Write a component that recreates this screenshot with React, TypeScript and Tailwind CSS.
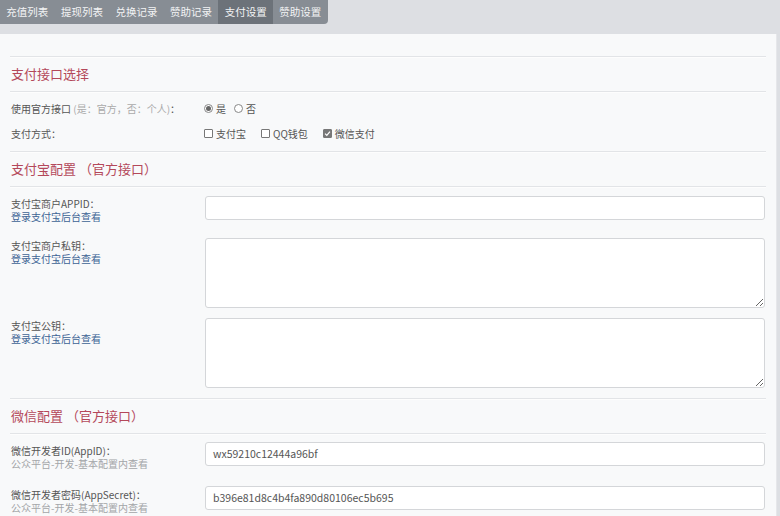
import React from "react";

const font = { fontFamily: '"Noto Sans CJK SC", "Noto Sans", "Liberation Sans", sans-serif' };

function Hr() {
  return <div className="h-0 border-t border-[#e2e4e7] shadow-[0_1px_0_#fdfdfd]" />;
}

function Title({ children }: { children: React.ReactNode }) {
  return (
    <div className="h-[34px] flex items-center text-[13px] text-[#b4485a] pl-px">
      {children}
    </div>
  );
}

function Radio({ checked }: { checked?: boolean }) {
  return (
    <span className="inline-flex w-[9px] h-[9px] rounded-full border border-[#888] items-center justify-center bg-white">
      {checked && <span className="w-[5px] h-[5px] rounded-full bg-[#666]" />}
    </span>
  );
}

function Check({ checked }: { checked?: boolean }) {
  return (
    <span
      className={
        "inline-flex w-[9px] h-[9px] rounded-[1px] border items-center justify-center " +
        (checked ? "bg-[#777] border-[#777]" : "bg-white border-[#777]")
      }
    >
      {checked && (
        <svg width="7" height="7" viewBox="0 0 8 8">
          <path d="M1.2 4.2 L3.2 6.1 L6.8 1.8" stroke="#fff" strokeWidth="1.4" fill="none" />
        </svg>
      )}
    </span>
  );
}

function FieldLabel({ main, sub, subColor, top }: { main: string; sub: string; subColor: string; top: string }) {
  return (
    <div className={"w-[194px] shrink-0 h-full text-[10px] " + top}>
      <div className="h-[13px] leading-[13px] text-[#555] whitespace-nowrap">{main}</div>
      <div className={"h-[13px] leading-[13px] whitespace-nowrap " + subColor}>{sub}</div>
    </div>
  );
}

export default function App() {
  const tabs = ["充值列表", "提现列表", "兑换记录", "赞助记录", "支付设置", "赞助设置"];
  return (
    <div className="w-[780px] h-[516px] overflow-hidden bg-[#dddfe3]" style={font}>
      <div className="h-[24px] flex">
        <div className="flex bg-[#878d94] rounded-br-[4px] overflow-hidden">
          {tabs.map((t, i) => (
            <div
              key={t}
              className={
                "w-[54.6px] h-[24px] flex items-center justify-center text-[10.5px] text-[#f3f4f5] " +
                (i === 4 ? "bg-[#6c7279]" : "")
              }
            >
              {t}
            </div>
          ))}
        </div>
      </div>
      <div className="h-[10px]" />
      <div className="mr-[3px] bg-[#f8f9fa] border-r border-[#e6e7ea] h-[482px] px-[10px] pt-[22px]">
        <Hr />
        <Title>支付接口选择</Title>
        <Hr />
        <div className="pt-[4px] pb-[5px] text-[10px] text-[#555]">
          <div className="h-[25px] flex items-center">
            <div className="w-[194px] pl-px">
              使用官方接口 <span className="text-[#aaa]">(是：官方，否：个人)</span>：
            </div>
            <div className="flex items-center gap-[3px]">
              <Radio checked />
              <span className="mr-[5px]">是</span>
              <Radio />
              <span>否</span>
            </div>
          </div>
          <div className="h-[25px] flex items-center">
            <div className="w-[194px] pl-px">支付方式：</div>
            <div className="flex items-center">
              <Check />
              <span className="ml-[3px] mr-[15px]">支付宝</span>
              <Check />
              <span className="ml-[3px] mr-[15px]">QQ钱包</span>
              <Check checked />
              <span className="ml-[3px]">微信支付</span>
            </div>
          </div>
        </div>
        <Hr />
        <Title>支付宝配置 （官方接口）</Title>
        <Hr />
        <div className="pt-[9px] pl-px">
          <div className="flex h-[24px]">
            <FieldLabel top="pt-[1px]" main="支付宝商户APPID：" sub="登录支付宝后台查看" subColor="text-[#3d6495]" />
            <input
              className="w-[560px] h-[24px] bg-white border border-[#d4d6d9] rounded-[3px] outline-none"
              readOnly
            />
          </div>
          <div className="flex h-[70px] mt-[18px]">
            <FieldLabel top="pt-[1px]" main="支付宝商户私钥：" sub="登录支付宝后台查看" subColor="text-[#3d6495]" />
            <textarea
              className="block w-[560px] h-[70px] bg-white border border-[#d4d6d9] rounded-[3px] outline-none"
              readOnly
            />
          </div>
          <div className="flex h-[70px] mt-[10px]">
            <FieldLabel top="pt-[1px]" main="支付宝公钥：" sub="登录支付宝后台查看" subColor="text-[#3d6495]" />
            <textarea
              className="block w-[560px] h-[70px] bg-white border border-[#d4d6d9] rounded-[3px] outline-none"
              readOnly
            />
          </div>
        </div>
        <div className="h-[10px]" />
        <Hr />
        <Title>微信配置 （官方接口）</Title>
        <Hr />
        <div className="pt-[8px] pl-px">
          <div className="flex h-[24px]">
            <FieldLabel top="pt-[2px]" main="微信开发者ID(AppID)：" sub="公众平台-开发-基本配置内查看" subColor="text-[#a3a5a8]" />
            <div className="w-[560px] h-[24px] bg-white border border-[#d4d6d9] rounded-[3px] flex items-center pl-[7px] text-[10.5px] text-[#555]">
              wx59210c12444a96bf
            </div>
          </div>
          <div className="flex h-[24px] mt-[20px]">
            <FieldLabel top="pt-[2px]" main="微信开发者密码(AppSecret)：" sub="公众平台-开发-基本配置内查看" subColor="text-[#a3a5a8]" />
            <div className="w-[560px] h-[24px] bg-white border border-[#d4d6d9] rounded-[3px] flex items-center pl-[7px] text-[10.5px] text-[#555]">
              b396e81d8c4b4fa890d80106ec5b695
            </div>
          </div>
        </div>
      </div>
    </div>
  );
}
